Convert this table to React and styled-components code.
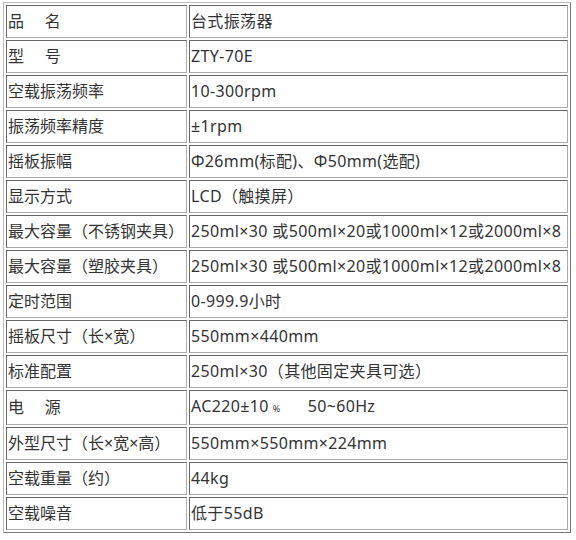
import React from "react";
import styled, { createGlobalStyle } from "styled-components";

const rows = [
  ["品\u00a0\u00a0\u00a0\u00a0\u00a0名", "台式振荡器"],
  ["型\u00a0\u00a0\u00a0\u00a0\u00a0号", "ZTY-70E"],
  ["空载振荡频率", "10-300rpm"],
  ["振荡频率精度", "±1rpm"],
  ["摇板振幅", "Φ26mm(标配)、Φ50mm(选配)"],
  ["显示方式", "LCD（触摸屏）"],
  ["最大容量（不锈钢夹具）", "250ml×30 或500ml×20或1000ml×12或2000ml×8"],
  ["最大容量（塑胶夹具）", "250ml×30 或500ml×20或1000ml×12或2000ml×8"],
  ["定时范围", "0-999.9小时"],
  ["摇板尺寸（长×宽）", "550mm×440mm"],
  ["标准配置", "250ml×30（其他固定夹具可选）"],
  ["电\u00a0\u00a0\u00a0\u00a0\u00a0源", "power"],
  ["外型尺寸（长×宽×高）", "550mm×550mm×224mm"],
  ["空载重量（约）", "44kg"],
  ["空载噪音", "低于55dB"],
];

const Global = createGlobalStyle`
  body {
    margin: 0;
    background: #fff;
    font-family: "Noto Sans", "Noto Sans CJK SC", sans-serif;
    color: #333;
  }
`;

const Table = styled.table`
  margin: 2px 0 0 3px;
  width: 568px;
  table-layout: fixed;
  border-collapse: separate;
  border-spacing: 2px;
  border: 1px solid;
  border-color: #bbb #777 #777 #bbb;
`;

const Cell = styled.td`
  height: 31px;
  padding: 0 1px;
  border: 1px solid;
  border-color: #666 #aaa #aaa #666;
  font-size: 16px;
  letter-spacing: ${(p) => (p.$label ? "0" : "0.35px")};
  line-height: 31px;
  white-space: nowrap;
  vertical-align: middle;
  width: ${(p) => (p.$label ? "177px" : "auto")};
`;

const Small = styled.span`
  font-size: 9px;
  margin-left: 4px;
`;

const Power = () => (
  <>
    AC220±10<Small>%</Small>
    {"\u00a0\u00a0\u00a0\u00a0\u00a0\u00a050~60Hz"}
  </>
);

export default function App() {
  return (
    <>
      <Global />
      <Table>
        <tbody>
          {rows.map(([k, v], i) => (
            <tr key={i}>
              <Cell $label>{k}</Cell>
              <Cell>{v === "power" ? <Power /> : v}</Cell>
            </tr>
          ))}
        </tbody>
      </Table>
    </>
  );
}
